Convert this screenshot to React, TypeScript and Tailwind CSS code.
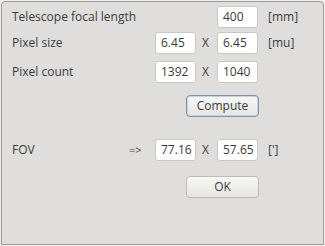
import React from "react";

const font = { fontFamily: '"Open Sans", "DejaVu Sans", sans-serif' };

function Field({ value }: { value: string }) {
  return (
    <div className="flex h-[22px] w-[41px] items-center rounded-[3px] border border-[#c8c8c6] bg-white pl-[5px] text-[12px] text-[#3a3a3a]">
      {value}
    </div>
  );
}

function Row({
  label,
  arrow,
  a,
  b,
  unit,
}: {
  label: string;
  arrow?: string;
  a?: string;
  b: string;
  unit?: string;
}) {
  return (
    <div className="flex items-center whitespace-nowrap">
      <div className="w-[117px] text-[12px]">{label}</div>
      <div className="w-[26px] text-[11px]">{arrow}</div>
      <div className="w-[40px]">{a && <Field value={a} />}</div>
      <div className="w-[22px] pl-[7px] text-[12px]">{a ? "X" : ""}</div>
      <Field value={b} />
      <div className="pl-[10px] text-[12px]">{unit}</div>
    </div>
  );
}

function Button({ label, focused }: { label: string; focused?: boolean }) {
  return (
    <div
      className={`flex h-[22px] w-[73px] items-center justify-center rounded-[4px] border bg-gradient-to-b from-[#f8f8f7] to-[#e6e5e3] text-[12px] ${
        focused ? "border-[#7f93ac] shadow-[inset_0_0_0_1px_#c7d3e2]" : "border-[#bdbcba]"
      }`}
    >
      {label}
    </div>
  );
}

export default function App() {
  return (
    <div className="h-[246px] w-[325px] bg-[#f0efee] p-[1px]" style={font}>
      <div className="h-full w-full rounded-t-[4px] border border-[#9c9b99] bg-[#dfdedc] text-[#3c3c3c]">
        <div className="flex flex-col pl-[10px] pt-[4px]">
          <Row label="Telescope focal length" b="400" unit="[mm]" />
          <div className="h-[4px]" />
          <Row label="Pixel size" a="6.45" b="6.45" unit="[mu]" />
          <div className="h-[7px]" />
          <Row label="Pixel count" a="1392" b="1040" />
          <div className="flex pl-[174px] pt-[12px]">
            <Button label="Compute" focused />
          </div>
          <div className="h-[22px]" />
          <Row label="FOV" arrow="=>" a="77.16" b="57.65" unit="[']" />
          <div className="flex pl-[174px] pt-[15px]">
            <Button label="OK" />
          </div>
        </div>
      </div>
    </div>
  );
}
